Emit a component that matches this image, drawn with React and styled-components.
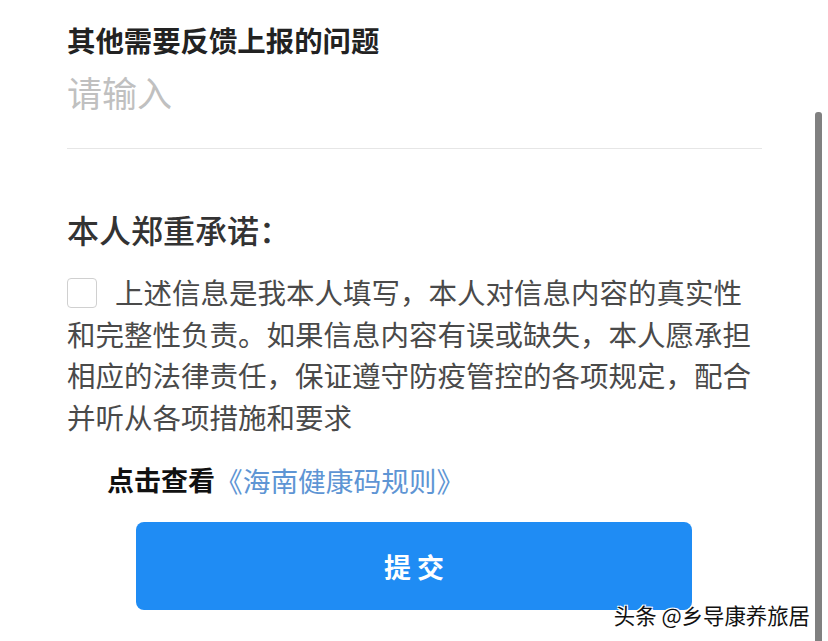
import React, { useState } from 'react';
import styled, { createGlobalStyle } from 'styled-components';

const GlobalStyle = createGlobalStyle`
    html, body {
        margin: 0;
        padding: 0;
        background: #ffffff;
    }
    body {
        font-family: "Noto Sans CJK SC", "Noto Sans", sans-serif;
    }
`;

const App = () => {
    const [text, setText] = useState(''), [agreed, setAgreed] = useState(false);

    return <StyledScreen>
        <GlobalStyle />
        <StyledPage>
            <StyledLabel>其他需要反馈上报的问题</StyledLabel>
            <StyledInput placeholder="请输入" value={text} onChange={e => setText(e.target.value)} />

            <StyledPromiseTitle>本人郑重承诺：</StyledPromiseTitle>
            <StyledPromise>
                <StyledCheck checked={agreed} onClick={() => setAgreed(!agreed)} />
                上述信息是我本人填写，本人对信息内容的真实性和完整性负责。如果信息内容有误或缺失，本人愿承担相应的法律责任，保证遵守防疫管控的各项规定，配合并听从各项措施和要求
            </StyledPromise>

            <StyledRuleRow>
                点击查看<StyledLink href="#">《海南健康码规则》</StyledLink>
            </StyledRuleRow>

            <StyledButton type="button">提 交</StyledButton>
        </StyledPage>

        <StyledScrollbar />
        <StyledWatermark>头条 @乡导康养旅居</StyledWatermark>
    </StyledScreen>
};

const StyledScreen = styled.div`
    position: relative;
    width: 828px;
    height: 641px;
    overflow: hidden;
    background: #ffffff;
`;

const StyledPage = styled.div`
    display: flex;
    flex-direction: column;
    align-items: flex-start;
    padding: 20px 66px 0 67px;
`;

const StyledLabel = styled.div`
    font-size: 28.4px;
    line-height: 40px;
    font-weight: 700;
    color: #222222;
`;

const StyledInput = styled.input`
    align-self: stretch;
    box-sizing: border-box;
    margin: 8px 0 0 0;
    padding: 0 0 33px 0;
    height: 81px;
    border: none;
    border-bottom: 1px solid #e6e6e6;
    outline: none;
    background: transparent;
    font-family: "Noto Sans CJK SC", sans-serif;
    font-size: 35px;
    line-height: 48px;
    color: #333333;
    &::placeholder {
        color: #c0c0c0;
    }
`;

const StyledPromiseTitle = styled.div`
    margin-top: 58px;
    font-size: 32px;
    line-height: 44px;
    font-weight: 500;
    color: #333333;
`;

const StyledPromise = styled.p`
    margin: 20px 0 0 0;
    font-size: 28.5px;
    line-height: 41.5px;
    color: #4a4a4a;
`;

const StyledCheck = styled.span`
    display: inline-block;
    box-sizing: border-box;
    width: 30px;
    height: 30px;
    margin-right: 18px;
    vertical-align: -4px;
    border: 1.5px solid #d0d0d0;
    border-radius: 4px;
    cursor: pointer;
    background: ${props => props.checked ? "#1f8cf4" : "#ffffff"};
`;

const StyledRuleRow = styled.div`
    display: flex;
    align-items: center;
    height: 38px;
    margin-top: 24px;
    padding-left: 40px;
    font-size: 27px;
    line-height: 38px;
    font-weight: 700;
    color: #111111;
`;

const StyledLink = styled.a`
    font-size: 27.7px;
    line-height: 38px;
    font-weight: 400;
    color: #5e95d4;
    text-decoration: none;
`;

const StyledButton = styled.button`
    margin: 23px 0 0 69px;
    width: 556px;
    height: 88px;
    border: none;
    border-radius: 8px;
    background: #1f8cf4;
    color: #ffffff;
    font-family: "Noto Sans CJK SC", sans-serif;
    font-size: 27px;
    font-weight: 700;
    cursor: pointer;
`;

const StyledScrollbar = styled.div`
    position: absolute;
    top: 112px;
    right: 6px;
    bottom: 0;
    width: 7px;
    border-radius: 3px 3px 0 0;
    background: #808080;
`;

const StyledWatermark = styled.div`
    position: absolute;
    right: 18px;
    bottom: 12px;
    font-size: 21.4px;
    line-height: 28px;
    color: #111111;
    text-shadow: 1px 1px 0 #fff, -1px -1px 0 #fff, 1px -1px 0 #fff, -1px 1px 0 #fff;
`;

export default App;
